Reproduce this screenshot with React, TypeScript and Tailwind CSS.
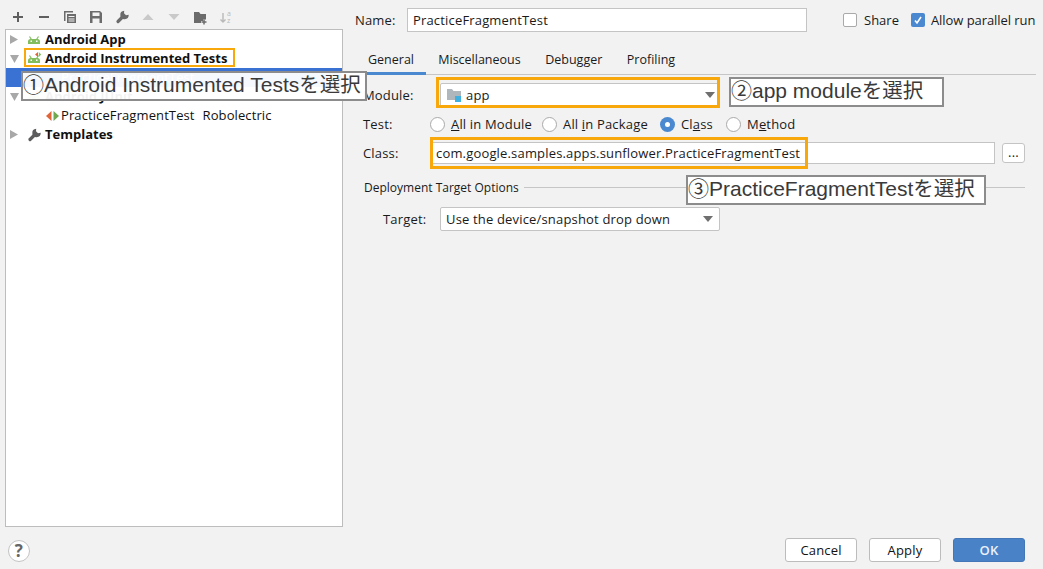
import { ReactNode } from "react";

const UI_FONT = "font-['Open_Sans','DejaVu_Sans',sans-serif]";

const ToolIcon = ({ children }: { children: ReactNode }) => (
  <svg width="26" height="16" viewBox="0 0 26 16" className="shrink-0">
    {children}
  </svg>
);

const Wrench = ({ fill }: { fill: string }) => (
  <>
    <path d="M15.200 1.800A4.200 4.200 0 1 0 19.700 5.800L17 6.200 15 4.200Z" fill={fill} />
    <path d="M9 12.500 13.500 8" stroke={fill} strokeWidth="3.200" strokeLinecap="round" />
  </>
);

const Toolbar = () => (
  <div className="h-[29px] pt-[9px] flex items-start">
    <ToolIcon>
      <path d="M13 3v10M8 8h10" stroke="#5f5f5f" strokeWidth="2" />
    </ToolIcon>
    <ToolIcon>
      <path d="M8 8h10" stroke="#5f5f5f" strokeWidth="2" />
    </ToolIcon>
    <ToolIcon>
      <path d="M7 2h9v1.500H8.500V12H7z" fill="#6b6b6b" />
      <path
        d="M10 5h9v9h-9zM11.500 7v1h6V7zM11.500 9.500v1h6v-1zM11.500 11.500v1h6v-1z"
        fill="#6b6b6b"
        fillRule="evenodd"
      />
    </ToolIcon>
    <ToolIcon>
      <path
        d="M7 2h10l2 2v10H7zM9.500 3.500v3.500h7V3.500zM9.500 9.500V14h7V9.500z"
        fill="#6b6b6b"
        fillRule="evenodd"
      />
    </ToolIcon>
    <ToolIcon>
      <Wrench fill="#6b6b6b" />
    </ToolIcon>
    <ToolIcon>
      <path d="M7.500 11 13 5l5.500 6z" fill="#c9c9c9" />
    </ToolIcon>
    <ToolIcon>
      <path d="M7.500 5 13 11l5.500-6z" fill="#c9c9c9" />
    </ToolIcon>
    <ToolIcon>
      <path d="M7 3h5l1.500 2H19v5.500h-3V12h-2v2H7z" fill="#6b6b6b" />
      <path d="M17 10.500v5M14.500 13h5" stroke="#6b6b6b" strokeWidth="1.500" />
    </ToolIcon>
    <ToolIcon>
      <path d="M10 4v9M7.500 10.500l2.500 2.500 2.500-2.500" stroke="#b9b9b9" strokeWidth="1.400" fill="none" />
      <text x="14" y="7" fontSize="7" fill="#b9b9b9">a</text>
      <text x="14" y="14" fontSize="7" fill="#b9b9b9">z</text>
    </ToolIcon>
  </div>
);

const Arrow = ({ open }: { open?: boolean }) => (
  <svg width="9" height="9" viewBox="0 0 9 9" className="shrink-0">
    <path d={open ? "M0 1h9L4.500 9z" : "M0 0l8 4.500L0 9z"} fill="#a8a8a8" />
  </svg>
);

const AndroidIcon = ({ badge }: { badge?: boolean }) => (
  <svg width="14" height="14" viewBox="0 0 14 14" className="shrink-0">
    <path d="M0 11V8.500Q0 6 2.500 6h7Q12 6 12 8.500V11z" fill="#82bd5e" />
    <path d="M1.500 3.500 3.500 6.500M10.500 3.500l-2 3" stroke="#82bd5e" strokeWidth="1.200" />
    <rect x="2.500" y="7.500" width="1.500" height="1.500" fill="#fff" />
    <rect x="8" y="7.500" width="1.500" height="1.500" fill="#fff" />
    {badge && (
      <>
        <path d="M7 2.500 10 0v5z" fill="#e0663a" />
        <path d="M10.800 0l2.400 2.500-2.400 2.500z" fill="#82bd5e" />
      </>
    )}
  </svg>
);

const WrenchIcon = () => (
  <svg width="26" height="16" viewBox="0 0 26 16" className="shrink-0 -ml-[7px]">
    <Wrench fill="#5d5d5d" />
  </svg>
);

const TreeRow = ({
  arrow,
  open,
  icon,
  selected,
  bold,
  children,
}: {
  arrow?: boolean;
  open?: boolean;
  icon?: ReactNode;
  selected?: boolean;
  bold?: boolean;
  children?: ReactNode;
}) => (
  <div
    className={`h-[19px] flex items-center pl-[4px] text-[13px] whitespace-nowrap ${
      selected ? "bg-[#3a72d4] text-white" : "text-[#111]"
    } ${bold ? "font-bold tracking-normal" : "tracking-[0.1px]"}`}
  >
    <span className="w-[18px] flex items-center">{arrow && <Arrow open={open} />}</span>
    <span className="w-[17px] flex items-center">{icon}</span>
    <span>{children}</span>
  </div>
);

const Tree = () => (
  <div className="flex-1 bg-white border border-[#bdbdbd] overflow-hidden">
    <TreeRow arrow icon={<AndroidIcon />} bold>
      Android App
    </TreeRow>
    <TreeRow arrow open icon={<AndroidIcon badge />} bold>
      Android Instrumented Tests
    </TreeRow>
    <TreeRow selected>
      <span className="pl-[16px]">PracticeFragmentTest</span>
    </TreeRow>
    <TreeRow arrow open icon={<AndroidIcon badge />} bold>
      Android JUnit
    </TreeRow>
    <div className="h-[19px] flex items-center pl-[40px] text-[13px] tracking-[0.1px] text-[#111] whitespace-nowrap">
      <svg width="13" height="10" viewBox="0 0 13 10" className="shrink-0">
        <path d="M5.500 0v10L0 5z" fill="#e0663a" />
        <path d="M7.500 0v10L13 5z" fill="#6fa84f" />
      </svg>
      <span className="pl-[2px]">PracticeFragmentTest</span>
      <span className="pl-[8px]">Robolectric</span>
    </div>
    <TreeRow arrow icon={<WrenchIcon />} bold>
      Templates
    </TreeRow>
  </div>
);

const Tab = ({ label, active }: { label: string; active?: boolean }) => (
  <div
    className={`h-[30px] flex pt-[6px] text-[12.500px] tracking-normal -mb-[1px] ${
      active ? "border-b-[3px] border-[#4a88d0] w-[59px] pl-[1px]" : "px-[12.250px]"
    }`}
  >
    {label}
  </div>
);

const Radio = ({
  label,
  checked,
  className,
}: {
  label: ReactNode;
  checked?: boolean;
  className?: string;
}) => (
  <div className={`flex items-center gap-[6px] ${className ?? ""}`}>
    {checked ? (
      <span className="w-[15px] h-[15px] rounded-full bg-[#4a88d0] flex items-center justify-center">
        <span className="w-[5px] h-[5px] rounded-full bg-white" />
      </span>
    ) : (
      <span className="w-[15px] h-[15px] rounded-full bg-white border border-[#a9a9a9]" />
    )}
    <span className="pt-[2px]">{label}</span>
  </div>
);

const Caret = () => (
  <svg width="10" height="6" viewBox="0 0 10 6" className="shrink-0">
    <path d="M0 0h10L5 6z" fill="#6f6f6f" />
  </svg>
);

const Button = ({ label, primary }: { label: string; primary?: boolean }) => (
  <div
    className={`h-[24px] w-[72px] rounded-[3px] flex items-center justify-center pt-[2px] text-[13px] ${
      primary
        ? "bg-[#4a82c8] border border-[#4377b8] text-[#eaf1fa] font-semibold"
        : "bg-white border border-[#bcbcbc] text-[#111]"
    }`}
  >
    {label}
  </div>
);

const Note = ({ className, text }: { className: string; text: string }) => (
  <div
    className={`absolute h-[30px] border-2 border-[#8c8c8c] bg-white/95 flex items-center pb-[2px] text-[21px] tracking-normal text-[#3a3a3a] whitespace-nowrap font-['Liberation_Sans','Noto_Sans_CJK_JP',sans-serif] ${className}`}
  >
    {text}
    <span className="text-[20.500px]">を選択</span>
  </div>
);

export default function App() {
  return (
    <div
      className={`relative w-[1043px] h-[569px] overflow-hidden bg-[#f2f2f2] text-[#1a1a1a] text-[13px] tracking-[0.17px] flex flex-col ${UI_FONT}`}
    >
      <div className="flex-1 flex min-h-0">
        {/* Left tree */}
        <div className="w-[343px] shrink-0 pl-[5px] flex flex-col">
          <Toolbar />
          <Tree />
        </div>

        {/* Right form */}
        <div className="flex-1 min-w-0 pl-[12px] pr-[7px] pt-[8px] flex flex-col">
          <div className="h-[24px] flex items-center">
            <span className="w-[52px] pt-[2px]">Name:</span>
            <div className="w-[400px] h-[24px] bg-white border border-[#c4c4c4] flex items-center pt-[2px] pl-[5px]">
              PracticeFragmentTest
            </div>
            <span className="w-[14px] h-[14px] ml-[36px] rounded-[2px] bg-white border border-[#a9a9a9]" />
            <span className="ml-[7px] pt-[2px] tracking-normal">Share</span>
            <span className="w-[14px] h-[14px] ml-[12px] rounded-[2px] bg-[#4a88d0] flex items-center justify-center">
              <svg width="10" height="10" viewBox="0 0 10 10">
                <path d="M2 5.500l2 2.500 4-6" stroke="#fff" strokeWidth="1.600" fill="none" />
              </svg>
            </span>
            <span className="ml-[6px] pt-[2px] tracking-[-0.06px] whitespace-nowrap">Allow parallel run</span>
          </div>

          <div className="mt-[11px] h-[32px] flex items-end border-b border-[#c6c6c6]">
            <div className="ml-[12px] flex items-end">
              <Tab label="General" active />
              <Tab label="Miscellaneous" />
              <Tab label="Debugger" />
              <Tab label="Profiling" />
            </div>
          </div>

          <div className="pl-[8px] pr-[11px] flex flex-col">
            <div className="mt-[8px] h-[24px] flex items-center">
              <span className="w-[77px] pt-[2px]">Module:</span>
              <div className="w-[280px] h-[24px] bg-white border border-[#c4c4c4] rounded-[2px] flex items-center pl-[6px] pr-[4px]">
                <svg width="14" height="14" viewBox="0 0 14 14" className="shrink-0">
                  <path d="M0 1h5l1.500 2H14v9H0z" fill="#afb6bc" />
                  <rect x="8" y="8" width="6" height="6" fill="#3fb0e0" />
                </svg>
                <span className="ml-[5px] pt-[2px] flex-1">app</span>
                <Caret />
              </div>
            </div>

            <div className="mt-[5px] h-[24px] flex items-center">
              <span className="w-[67px] pt-[2px]">Test:</span>
              <Radio label={<><u>A</u>ll in Module</>} className="w-[112px]" />
              <Radio label={<>All <u>i</u>n Package</>} className="w-[118px]" />
              <Radio label={<>Cl<u>a</u>ss</>} checked className="w-[66px]" />
              <Radio label={<>M<u>e</u>thod</>} />
            </div>

            <div className="mt-[6px] h-[22px] flex items-center">
              <span className="w-[69px] pt-[2px]">Class:</span>
              <div className="w-[563px] h-[22px] bg-white border border-[#c4c4c4] flex items-center pt-[2px] pl-[3px]">
                com.google.samples.apps.sunflower.PracticeFragmentTest
              </div>
              <div className="ml-[7px] w-[23px] h-[20px] bg-white border border-[#c4c4c4] rounded-[3px] flex items-center justify-center leading-none pb-[2px]">
                ...
              </div>
            </div>

            <div className="mt-[12px] h-[22px] flex items-center">
              <span className="ml-[1px] text-[12px] tracking-normal pt-[2px] whitespace-nowrap">Deployment Target Options</span>
              <span className="ml-[5px] flex-1 h-px bg-[#c6c6c6]" />
            </div>

            <div className="mt-[9px] h-[24px] flex items-center">
              <span className="w-[57px] ml-[20px] pt-[2px]">Target:</span>
              <div className="w-[280px] h-[24px] bg-white border border-[#c4c4c4] rounded-[2px] flex items-center pl-[5px] pr-[6px]">
                <span className="flex-1 pt-[2px]">Use the device/snapshot drop down</span>
                <Caret />
              </div>
            </div>
          </div>
        </div>
      </div>

      {/* Footer */}
      <div className="h-[42px] pl-[8px] pr-[18px] pb-[7px] flex items-end">
        <div className="w-[22px] h-[22px] rounded-full bg-white border border-[#c4c4c4] flex items-center justify-center font-bold text-[#666] text-[17px]">
          ?
        </div>
        <div className="ml-auto flex gap-[12px]">
          <Button label="Cancel" />
          <Button label="Apply" />
          <Button label="OK" primary />
        </div>
      </div>

      {/* Annotations drawn over the screenshot */}
      <div className="absolute left-[24px] top-[48px] w-[211px] h-[19px] border-[2px] border-[#f9a80c]" />
      <div className="absolute left-[436px] top-[77px] w-[284px] h-[31px] border-[3px] border-[#f9a80c]" />
      <div className="absolute left-[430px] top-[137px] w-[378px] h-[32px] border-[3px] border-[#f9a80c]" />
      <Note className="left-[21px] top-[71px] w-[346px]" text="①Android Instrumented Tests" />
      <Note className="left-[729px] top-[77px] w-[215px]" text="②app module" />
      <Note className="left-[686px] top-[175px] w-[300px]" text="③PracticeFragmentTest" />
    </div>
  );
}
